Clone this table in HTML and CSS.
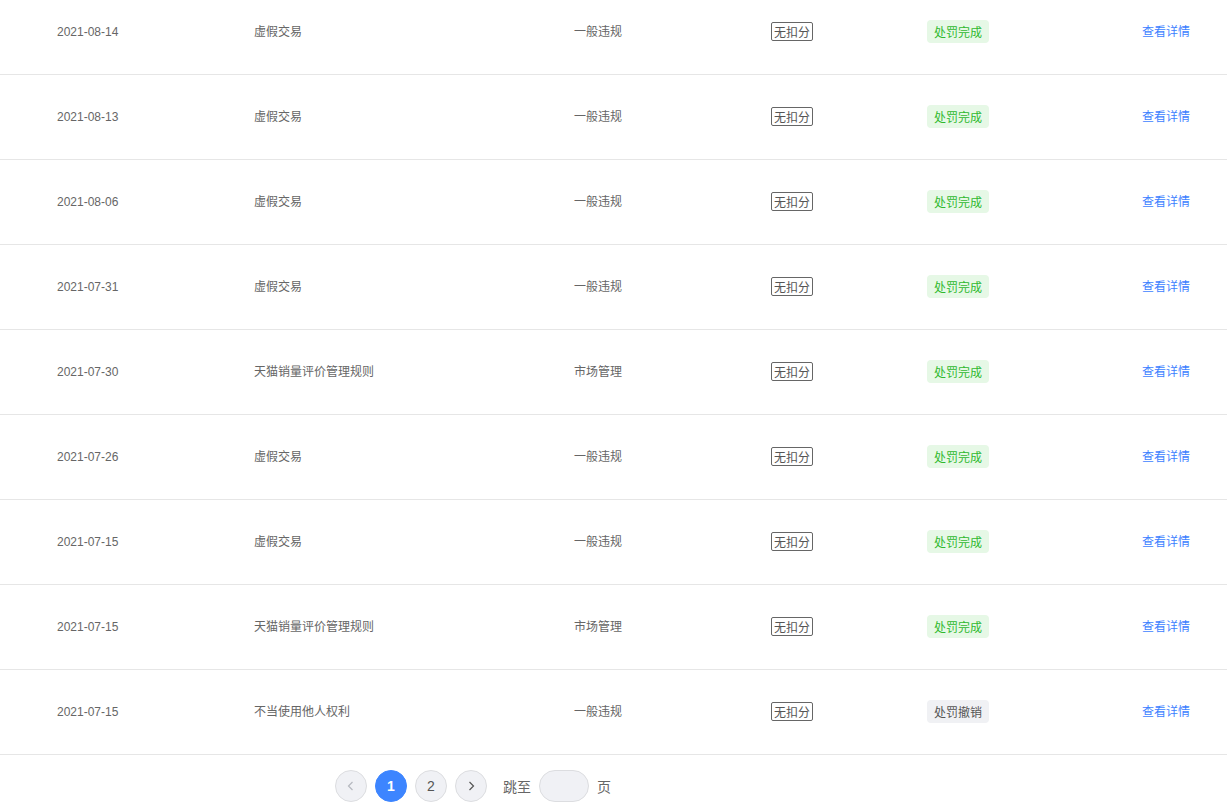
FILE: index.html
```html
<!DOCTYPE html>
<html lang="zh">
<head>
<meta charset="utf-8">
<link rel="stylesheet" href="styles.css">
</head>
<body>
<div class="page">
  <div class="list">
    <div class="row"><span class="date">2021-08-14</span><span class="name">虚假交易</span><span class="type">一般违规</span><span class="cell"><span class="score">无扣分</span></span><span class="cell"><span class="status done">处罚完成</span></span><a class="link">查看详情</a></div>
    <div class="row"><span class="date">2021-08-13</span><span class="name">虚假交易</span><span class="type">一般违规</span><span class="cell"><span class="score">无扣分</span></span><span class="cell"><span class="status done">处罚完成</span></span><a class="link">查看详情</a></div>
    <div class="row"><span class="date">2021-08-06</span><span class="name">虚假交易</span><span class="type">一般违规</span><span class="cell"><span class="score">无扣分</span></span><span class="cell"><span class="status done">处罚完成</span></span><a class="link">查看详情</a></div>
    <div class="row"><span class="date">2021-07-31</span><span class="name">虚假交易</span><span class="type">一般违规</span><span class="cell"><span class="score">无扣分</span></span><span class="cell"><span class="status done">处罚完成</span></span><a class="link">查看详情</a></div>
    <div class="row"><span class="date">2021-07-30</span><span class="name">天猫销量评价管理规则</span><span class="type">市场管理</span><span class="cell"><span class="score">无扣分</span></span><span class="cell"><span class="status done">处罚完成</span></span><a class="link">查看详情</a></div>
    <div class="row"><span class="date">2021-07-26</span><span class="name">虚假交易</span><span class="type">一般违规</span><span class="cell"><span class="score">无扣分</span></span><span class="cell"><span class="status done">处罚完成</span></span><a class="link">查看详情</a></div>
    <div class="row"><span class="date">2021-07-15</span><span class="name">虚假交易</span><span class="type">一般违规</span><span class="cell"><span class="score">无扣分</span></span><span class="cell"><span class="status done">处罚完成</span></span><a class="link">查看详情</a></div>
    <div class="row"><span class="date">2021-07-15</span><span class="name">天猫销量评价管理规则</span><span class="type">市场管理</span><span class="cell"><span class="score">无扣分</span></span><span class="cell"><span class="status done">处罚完成</span></span><a class="link">查看详情</a></div>
    <div class="row"><span class="date">2021-07-15</span><span class="name">不当使用他人权利</span><span class="type">一般违规</span><span class="cell"><span class="score">无扣分</span></span><span class="cell"><span class="status revoked">处罚撤销</span></span><a class="link">查看详情</a></div>
  </div>
  <div class="pager">
    <button class="pg disabled" aria-label="上一页"><svg width="12" height="12" viewBox="0 0 12 12"><path d="M7.5 2 L3.5 6 L7.5 10" fill="none" stroke="#b5b8bf" stroke-width="1.2"/></svg></button>
    <button class="pg active">1</button>
    <button class="pg">2</button>
    <button class="pg" aria-label="下一页"><svg width="12" height="12" viewBox="0 0 12 12"><path d="M4.5 2 L8.5 6 L4.5 10" fill="none" stroke="#555" stroke-width="1.2"/></svg></button>
    <span class="jump">跳至</span>
    <span class="input"></span>
    <span class="jump">页</span>
  </div>
</div>
</body>
</html>
```
FILE: styles.css
```css
* { box-sizing: border-box; }
html, body { margin: 0; padding: 0; background: #fff; }
body {
  font-family: "Liberation Sans", Arial, "Noto Sans CJK SC", sans-serif;
  font-size: 12px;
  color: #666;
  overflow: hidden;
}
.page { margin-top: -10px; }
.row {
  display: grid;
  grid-template-columns: 197px 320px 197px 156px 215px 1fr;
  align-items: center;
  height: 85px;
  padding-left: 57px;
  border-bottom: 1px solid #e6e6e6;
}
.date { color: #666; line-height: 16px; }
.name, .type, .link, .score, .status, .jump {
  font-family: "Noto Sans CJK SC", "Liberation Sans", sans-serif;
}
.name, .type { color: #666; line-height: 16px; margin-top: -2px; }
.cell { display: flex; margin-top: -2px; }
.score {
  display: inline-block;
  border: 1px solid #666;
  border-radius: 2px;
  padding: 0 2px;
  line-height: 17px;
  height: 19px;
  color: #555;
}
.status {
  display: inline-block;
  border-radius: 4px;
  padding: 0 7px;
  line-height: 23px;
  height: 23px;
}
.status.done { background: #e6f8e6; color: #2fb82f; }
.status.revoked { background: #f0f1f4; color: #555; }
.link { color: #3d7fff; cursor: pointer; line-height: 16px; margin-top: -2px; }
.pager {
  display: flex;
  align-items: center;
  gap: 8px;
  padding-left: 335px;
  margin-top: 15px;
}
.pg {
  width: 32px;
  height: 32px;
  border-radius: 50%;
  border: 1px solid #dcdde0;
  background: #f0f1f5;
  color: #555;
  font-family: "Liberation Sans", Arial, sans-serif;
  font-size: 14px;
  display: flex;
  align-items: center;
  justify-content: center;
  padding: 0;
}
.pg.active {
  background: #3d85ff;
  border-color: #3d85ff;
  color: #fff;
  font-weight: bold;
}
.jump { color: #666; font-size: 14px; margin-left: 8px; }
.input {
  width: 50px;
  height: 32px;
  border-radius: 16px;
  border: 1px solid #dcdde0;
  background: #f0f1f5;
}
.input + .jump { margin-left: 0; }
```
